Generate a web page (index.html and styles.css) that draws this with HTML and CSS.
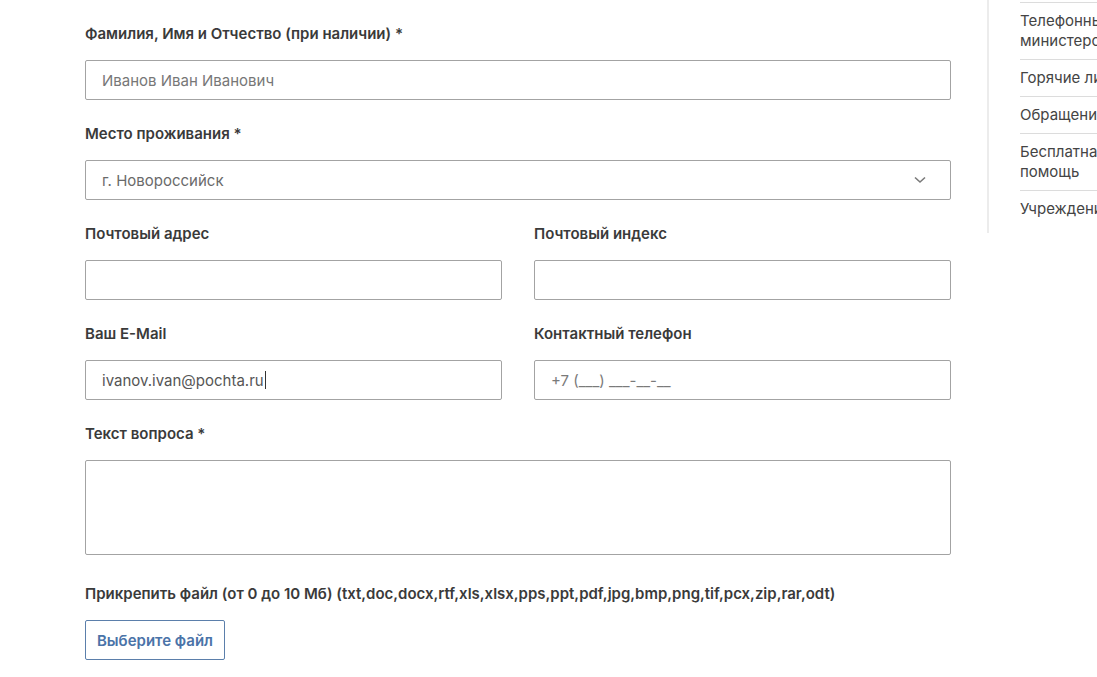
FILE: index.html
```html
<!DOCTYPE html>
<html lang="ru">
<head>
<meta charset="utf-8">
<title>Форма обращения</title>
<link rel="stylesheet" href="styles.css">
</head>
<body>
<div class="page">
  <form class="form">
    <div class="field">
      <label class="label">Фамилия, Имя и Отчество (при наличии) *</label>
      <input class="control" type="text" placeholder="Иванов Иван Иванович">
    </div>
    <div class="field">
      <label class="label">Место проживания *</label>
      <div class="control select">
        <span class="select-text">г. Новороссийск</span>
        <svg class="chevron" width="12" height="8" viewBox="0 0 12 8"><path d="M1 1.5 L6 6 L11 1.5" fill="none" stroke="#7a7a7a" stroke-width="1.6"/></svg>
      </div>
    </div>
    <div class="row">
      <div class="field">
        <label class="label">Почтовый адрес</label>
        <input class="control" type="text">
      </div>
      <div class="field">
        <label class="label">Почтовый индекс</label>
        <input class="control" type="text">
      </div>
    </div>
    <div class="row">
      <div class="field">
        <label class="label">Ваш E-Mail</label>
        <div class="control value">ivanov.ivan@pochta.ru<span class="caret"></span></div>
      </div>
      <div class="field">
        <label class="label">Контактный телефон</label>
        <input class="control phone" type="text" placeholder="+7 (___) ___-__-__">
      </div>
    </div>
    <div class="field field-text">
      <label class="label">Текст вопроса *</label>
      <textarea class="control textarea"></textarea>
    </div>
    <div class="field">
      <label class="label">Прикрепить файл (от 0 до 10 Мб) (txt,doc,docx,rtf,xls,xlsx,pps,ppt,pdf,jpg,bmp,png,tif,pcx,zip,rar,odt)</label>
      <button type="button" class="file-btn">Выберите файл</button>
    </div>
  </form>
  <aside class="aside">
    <ul class="menu">
      <li class="menu-item">Телефонные номера министерства</li>
      <li class="menu-item">Горячие линии</li>
      <li class="menu-item">Обращения граждан</li>
      <li class="menu-item">Бесплатная юридическая помощь</li>
      <li class="menu-item">Учреждения</li>
    </ul>
  </aside>
</div>
</body>
</html>
```
FILE: styles.css
```css
html, body {
  margin: 0;
  padding: 0;
  overflow: hidden;
  background: #fff;
}
body {
  font-family: "Inter", "Noto Sans", "Liberation Sans", sans-serif;
  color: #333;
}
.page {
  display: flex;
  align-items: flex-start;
  gap: 36px;
  padding-left: 85px;
}
.form {
  width: 866px;
  flex: none;
  padding-top: 24px;
}
.field {
  display: flex;
  flex-direction: column;
  margin-bottom: 24px;
}
.row {
  display: grid;
  grid-template-columns: 1fr 1fr;
  column-gap: 32px;
}
.label {
  font-size: 15px;
  font-weight: 600;
  line-height: 20px;
  color: #3a3a3a;
  margin-bottom: 16px;
  white-space: nowrap;
}
.control {
  box-sizing: border-box;
  height: 40px;
  width: 100%;
  border: 1px solid #a3a3a3;
  border-radius: 2px;
  padding: 0 16px;
  font-family: inherit;
  font-size: 15px;
  color: #555;
  background: #fff;
  outline: none;
}
.control::placeholder {
  color: #777;
}
.select {
  display: flex;
  align-items: center;
  justify-content: space-between;
  padding-right: 24px;
  color: #6a6a6a;
}
.chevron {
  display: block;
}
.value {
  display: flex;
  align-items: center;
  color: #555;
}
.caret {
  display: inline-block;
  width: 1px;
  height: 18px;
  background: #333;
  margin-left: 1px;
}
.phone::placeholder {
  color: #7a7a7a;
}
.textarea {
  display: block;
  height: 95px;
  resize: none;
  padding: 10px 16px;
}
.field-text {
  margin-bottom: 29px;
}
.file-btn {
  align-self: flex-start;
  width: 140px;
  height: 40px;
  border: 1px solid #5b7fab;
  border-radius: 2px;
  background: #fff;
  color: #4a73a8;
  font-family: inherit;
  font-size: 15px;
  font-weight: 600;
  padding: 0;
  cursor: pointer;
}
.aside {
  flex: none;
  width: 200px;
  border-left: 2px solid #ececec;
  padding: 2px 0 6px 31px;
}
.menu {
  list-style: none;
  margin: 0;
  padding: 0;
}
.menu-item {
  border-top: 1px solid #dcdcdc;
  padding: 8px 0 8px;
  font-size: 15px;
  line-height: 20px;
  color: #444;
}
```
